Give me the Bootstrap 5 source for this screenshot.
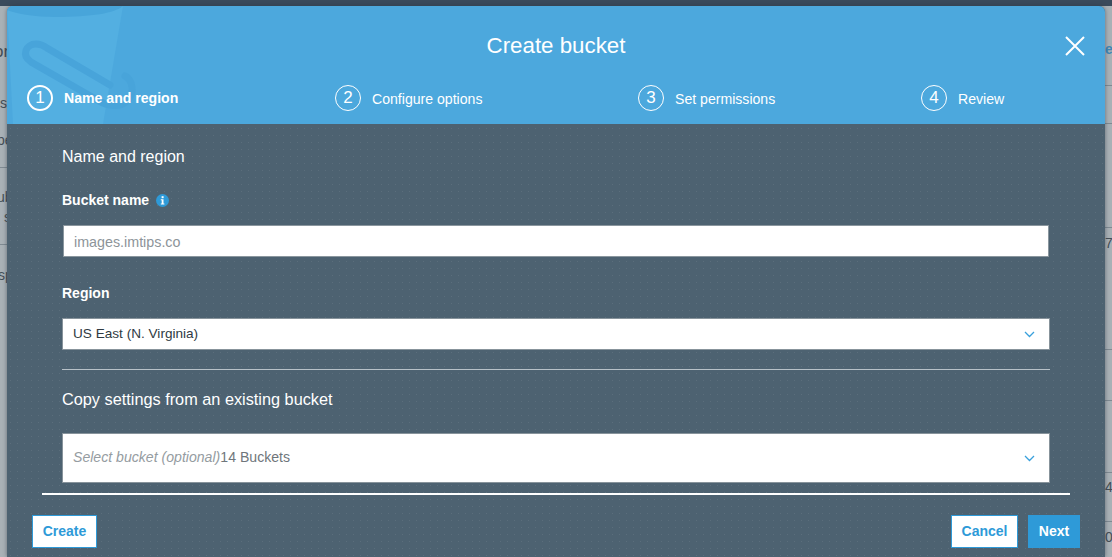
<!DOCTYPE html>
<html lang="en">
<head>
<meta charset="utf-8">
<title>Create bucket</title>
<link href="https://cdn.jsdelivr.net/npm/bootstrap@5.3.0/dist/css/bootstrap.min.css" rel="stylesheet">
<style>
html,body{height:100%;overflow:hidden;}
body{font-family:"Liberation Sans",Arial,sans-serif;background:#a9b1b6;position:relative;}
.topband{height:6px;background:#3a4a5b;}
.under{position:absolute;inset:0;overflow:hidden;color:#434e57;font-size:17px;line-height:20px;}
.under span{position:absolute;}
.under i{position:absolute;height:1px;background:#7f8a92;width:12px;}
.dlg{position:absolute;left:7px;right:7px;top:6px;bottom:0;display:flex;flex-direction:column;border-radius:6px 6px 0 0;overflow:hidden;box-shadow:0 0 4px rgba(40,50,60,.55);background-color:#4d6271;background-image:radial-gradient(rgba(255,255,255,.08) .7px,transparent .9px);background-size:7px 7px;}
.dlg-head{height:118px;background:#4ca8dd;color:#fff;position:relative;flex:none;}
.bucket-art{position:absolute;left:0;top:0;}
.dlg-title{position:relative;font-size:22.3px;line-height:26px;text-align:center;padding-top:27px;}
.closer{position:absolute;left:1058px;top:30px;background:none;border:0;padding:0;line-height:0;}
.steps{position:relative;margin-top:26px;padding-left:20px;}
.stp{font-size:14.1px;color:#fff;white-space:nowrap;}
.stp1{width:308px;}.stp2{width:303px;}.stp3{width:283px;}
.stp-num{width:26px;height:26px;border:1px solid #fff;border-radius:50%;font-size:17px;font-weight:300;line-height:24px;text-align:center;margin-right:11px;flex:none;}
.stp-lbl{padding-top:3px;}
.stp1 .stp-num{border-width:2px;line-height:22px;}
.stp1 .stp-lbl{font-weight:700;padding-top:1px;}
.dlg-body{flex:1;padding:0 55px;color:#fff;min-height:0;}
.sec-title{font-size:16px;line-height:20px;margin:23px 0 0;font-weight:400;}
.fld-lbl{font-size:14px;font-weight:700;line-height:18px;margin:0;}
.fld1{margin-top:24px;}
.fld2{margin-top:24px;}
.info-dot{width:13px;height:13px;margin-left:7px;flex:none;}
.inbox{display:block;width:986px;height:32px;margin:16px 0 0 1px;border:1px solid #8a969e;border-radius:0;padding:1px 10px 0;font-size:14.3px;font-family:inherit;background:#fff;color:#333;}
.inbox::placeholder{color:#8d9499;opacity:1;}
.pick{width:988px;background:#fff;border:1px solid #87939b;color:#2f3a42;font-size:13.6px;padding:0 14px 0 10px;}
.pick1{height:32px;margin-top:13px;}
.pick2{height:50px;margin-top:24px;color:#6f767b;font-size:14.1px;}
.pick2 em{color:#959ca1;}
.thin{width:988px;height:1px;background:#b7c1c8;margin-top:19px;}
.copy-title{font-size:16.3px;line-height:20px;margin:19px 0 0;font-weight:400;}
.thick{height:2px;background:#fff;margin:10px 35px 0;flex:none;}
.dlg-foot{flex:none;padding:20px 25px 9px;}
.foot-right{gap:10px;}
.act{border-radius:0;font-size:14px;font-weight:700;height:33px;padding:0;color:#2e9ad8;background:#fff;border:1px solid #2e9ad8;}
.act:hover{color:#2e9ad8;background:#fff;border-color:#2e9ad8;}
.act-create{width:65px;}
.act-cancel{width:67px;}
.act-next{width:52px;background:#2e9ad8;color:#fff;}
.act-next:hover{background:#2e9ad8;color:#fff;}
.chev{flex:none;}
</style>
</head>
<body>
<div class="topband"></div>
<div class="under" aria-hidden="true">
  <span style="left:-6px;top:42px">or</span>
  <span style="left:0;top:93px;font-size:14px">s</span>
  <span style="left:-3px;top:130px;font-size:14px">pe</span>
  <i style="left:0;top:167px"></i>
  <span style="left:-3px;top:187px;font-size:14px">ub</span>
  <span style="left:4px;top:207px;font-size:14px">s</span>
  <i style="left:0;top:244px"></i>
  <span style="left:-2px;top:265px;font-size:14px">sp</span>
  <span style="left:1105px;top:39px;font-size:14px;font-weight:700;color:#3f87b5">e</span>
  <i style="left:1100px;top:85px"></i>
  <i style="left:1100px;top:123px"></i>
  <i style="left:1100px;top:227px"></i>
  <span style="left:1105px;top:233px;font-size:14px">7</span>
  <i style="left:1100px;top:349px"></i>
  <i style="left:1100px;top:400px"></i>
  <i style="left:1100px;top:472px"></i>
  <span style="left:1105px;top:477px;font-size:14px">46</span>
  <i style="left:1100px;top:521px"></i>
  <span style="left:1105px;top:527px;font-size:14px">02</span>
</div>

<div class="dlg" role="dialog" aria-label="Create bucket">
  <div class="dlg-head">
    <svg class="bucket-art" width="130" height="118" viewBox="0 0 130 118" aria-hidden="true">
      <path d="M0 0H116L96 118H6Z" fill="#53afe1"/>
      <path d="M0 0H116C108 7 85 11 48 11C28 11 10 8 0 4Z" fill="#48a5da"/>
      <path d="M118 70C126 74 128 88 120 95C113 102 100 100 92 95L24 56C14 49 19 38 29 38C33 38 36 39 40 42L103 79" fill="none" stroke="#48a4da" stroke-width="7" stroke-linecap="round"/>
    </svg>
    <div class="dlg-title">Create bucket</div>
    <button type="button" class="closer" aria-label="Close">
      <svg width="20" height="20" viewBox="0 0 20 20"><path d="M1 1L19 19M19 1L1 19" stroke="#fff" stroke-width="2" fill="none"/></svg>
    </button>
    <div class="steps d-flex">
      <div class="stp stp1 d-flex align-items-center"><span class="stp-num">1</span><span class="stp-lbl">Name and region</span></div>
      <div class="stp stp2 d-flex align-items-center"><span class="stp-num">2</span><span class="stp-lbl">Configure options</span></div>
      <div class="stp stp3 d-flex align-items-center"><span class="stp-num">3</span><span class="stp-lbl">Set permissions</span></div>
      <div class="stp d-flex align-items-center"><span class="stp-num">4</span><span class="stp-lbl">Review</span></div>
    </div>
  </div>
  <div class="dlg-body">
    <h2 class="sec-title">Name and region</h2>
    <div class="fld1 d-flex align-items-center">
      <label class="fld-lbl" for="bname">Bucket name</label>
      <svg class="info-dot" viewBox="0 0 13 13" aria-hidden="true"><circle cx="6.5" cy="6.5" r="6.5" fill="#2e9ad8"/><rect x="5.6" y="2.2" width="2" height="2" fill="#fff"/><path d="M4.8 5.3H7.5V9.6H8.4V10.6H4.8V9.6H5.7V6.3H4.8Z" fill="#fff"/></svg>
    </div>
    <input id="bname" class="inbox" type="text" placeholder="images.imtips.co">
    <div class="fld2"><span class="fld-lbl">Region</span></div>
    <div class="pick pick1 d-flex align-items-center justify-content-between">
      <span>US East (N. Virginia)</span>
      <svg class="chev" width="11" height="7" viewBox="0 0 11 7" aria-hidden="true"><path d="M1 1L5.5 5.5L10 1" fill="none" stroke="#39a0dc" stroke-width="1.3"/></svg>
    </div>
    <div class="thin"></div>
    <h3 class="copy-title">Copy settings from an existing bucket</h3>
    <div class="pick pick2 d-flex align-items-center justify-content-between">
      <span><em>Select bucket (optional)</em>14 Buckets</span>
      <svg class="chev" width="11" height="7" viewBox="0 0 11 7" aria-hidden="true"><path d="M1 1L5.5 5.5L10 1" fill="none" stroke="#39a0dc" stroke-width="1.3"/></svg>
    </div>
  </div>
  <div class="thick"></div>
  <div class="dlg-foot d-flex justify-content-between">
    <button type="button" class="btn act act-create">Create</button>
    <div class="d-flex foot-right">
      <button type="button" class="btn act act-cancel">Cancel</button>
      <button type="button" class="btn act act-next">Next</button>
    </div>
  </div>
</div>
<script src="https://cdn.jsdelivr.net/npm/bootstrap@5.3.0/dist/js/bootstrap.bundle.min.js"></script>
</body>
</html>
